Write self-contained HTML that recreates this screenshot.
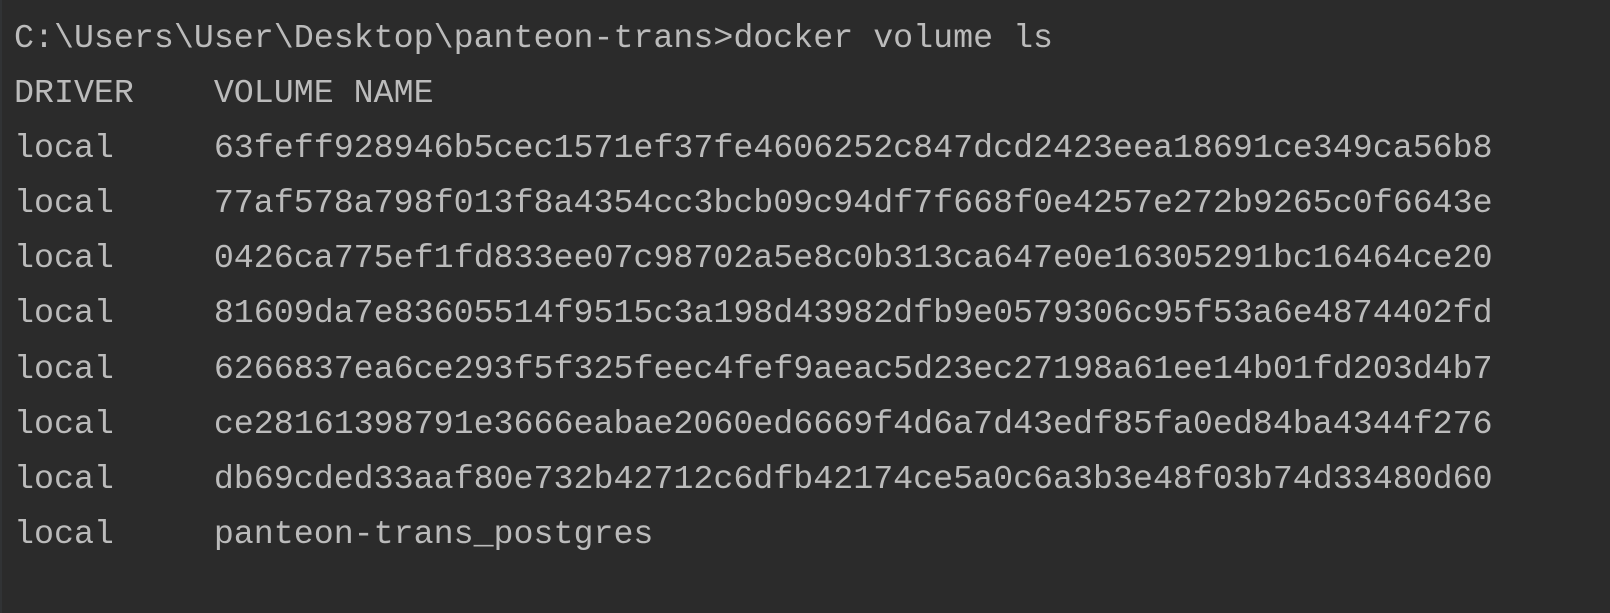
<!DOCTYPE html>
<html><head><style>
html,body{margin:0;padding:0;width:1610px;height:613px;background:#2b2b2b;overflow:hidden}
body{border-left:2px solid #313335;box-sizing:border-box}
pre{margin:0;position:absolute;left:14px;top:11px;font-family:"Liberation Mono",monospace;font-size:33.3px;line-height:55.1px;color:#bbbbbb}
</style></head><body><pre>C:\Users\User\Desktop\panteon-trans&gt;docker volume ls
DRIVER    VOLUME NAME
local     63feff928946b5cec1571ef37fe4606252c847dcd2423eea18691ce349ca56b8
local     77af578a798f013f8a4354cc3bcb09c94df7f668f0e4257e272b9265c0f6643e
local     0426ca775ef1fd833ee07c98702a5e8c0b313ca647e0e16305291bc16464ce20
local     81609da7e83605514f9515c3a198d43982dfb9e0579306c95f53a6e4874402fd
local     6266837ea6ce293f5f325feec4fef9aeac5d23ec27198a61ee14b01fd203d4b7
local     ce28161398791e3666eabae2060ed6669f4d6a7d43edf85fa0ed84ba4344f276
local     db69cded33aaf80e732b42712c6dfb42174ce5a0c6a3b3e48f03b74d33480d60
local     panteon-trans_postgres
</pre></body></html>
